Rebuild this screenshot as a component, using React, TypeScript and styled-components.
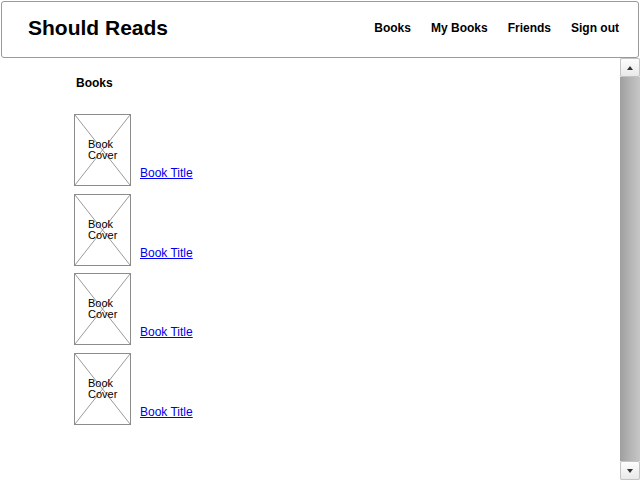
import styled, { createGlobalStyle } from 'styled-components'

const GlobalStyle = createGlobalStyle`
    html, body {
        margin: 0;
        padding: 0;
        background: #ffffff;
        font-family: "Liberation Sans", Arial, sans-serif;
        color: #000000;
    }
`

const Page = styled.div`
    width: 640px;
    height: 480px;
    display: flex;
    flex-direction: column;
    overflow: hidden;
`

const Header = styled.header`
    margin: 1px 1px 0 1px;
    border: 1px solid #9a9a9a;
    border-radius: 3px;
    display: flex;
    align-items: center;
    justify-content: space-between;
    padding: 0 19px 4px 26px;
    box-sizing: content-box;
    height: 51px;
`

const Brand = styled.h1`
    margin: 0;
    font-size: 21px;
    font-weight: bold;
`

const Nav = styled.nav`
    display: flex;
    gap: 20px;
`

const NavLink = styled.a`
    font-size: 12px;
    font-weight: bold;
    color: #000000;
    text-decoration: none;
    cursor: pointer;
`

const Body = styled.div`
    flex: 1;
    display: flex;
    min-height: 0;
`

const Main = styled.main`
    flex: 1;
    padding: 18px 0 0 74px;
`

const Heading = styled.h2`
    margin: 0 0 23px 2px;
    font-size: 12px;
    font-weight: bold;
    line-height: 15px;
`

const BookList = styled.ul`
    list-style: none;
    margin: 0;
    padding: 0;
    display: flex;
    flex-direction: column;
    gap: 7.6px;
`

const BookRow = styled.li`
    display: flex;
    align-items: flex-end;
    gap: 9px;
`

const Cover = styled.div`
    position: relative;
    width: 55px;
    height: 70px;
    border: 1px solid #8c8c8c;
    flex-shrink: 0;

    svg {
        position: absolute;
        inset: 0;
    }
`

const CoverText = styled.span`
    position: absolute;
    left: 13px;
    top: 24px;
    font-size: 11px;
    line-height: 11px;
    width: 40px;
`

const TitleLink = styled.a`
    font-size: 12px;
    color: #0000ee;
    text-decoration: underline;
    margin-bottom: 6px;
    cursor: pointer;
`

const Scrollbar = styled.div`
    width: 20px;
    display: flex;
    flex-direction: column;
    background: #e8e8e8;
`

const ScrollButton = styled.div`
    height: 19px;
    border: 1px solid #c4c4c4;
    border-radius: 2px;
    background: linear-gradient(to bottom, #fdfdfd, #e9e9e9);
    display: flex;
    align-items: center;
    justify-content: center;
    box-sizing: border-box;
    flex-shrink: 0;
`

const Arrow = styled.span<{ $down?: boolean }>`
    width: 0;
    height: 0;
    border-left: 3px solid transparent;
    border-right: 3px solid transparent;
    ${p => p.$down ? 'border-top: 4px solid #333;' : 'border-bottom: 4px solid #333;'}
`

const Thumb = styled.div`
    flex: 1;
    background: linear-gradient(to right, #9f9f9f, #b4b4b4 50%, #c6c6c6);
`

const books = [1, 2, 3, 4]

export default function App() {
    return (
        <Page>
            <GlobalStyle />
            <Header>
                <Brand>Should Reads</Brand>
                <Nav>
                    <NavLink>Books</NavLink>
                    <NavLink>My Books</NavLink>
                    <NavLink>Friends</NavLink>
                    <NavLink>Sign out</NavLink>
                </Nav>
            </Header>
            <Body>
                <Main>
                    <Heading>Books</Heading>
                    <BookList>
                        {books.map(b => (
                            <BookRow key={b}>
                                <Cover>
                                    <svg width="55" height="70" viewBox="0 0 55 70">
                                        <line x1="0" y1="0" x2="55" y2="70" stroke="#9a9a9a" strokeWidth="1" />
                                        <line x1="55" y1="0" x2="0" y2="70" stroke="#9a9a9a" strokeWidth="1" />
                                    </svg>
                                    <CoverText>Book Cover</CoverText>
                                </Cover>
                                <TitleLink>Book Title</TitleLink>
                            </BookRow>
                        ))}
                    </BookList>
                </Main>
                <Scrollbar>
                    <ScrollButton><Arrow /></ScrollButton>
                    <Thumb />
                    <ScrollButton><Arrow $down /></ScrollButton>
                </Scrollbar>
            </Body>
        </Page>
    )
}
